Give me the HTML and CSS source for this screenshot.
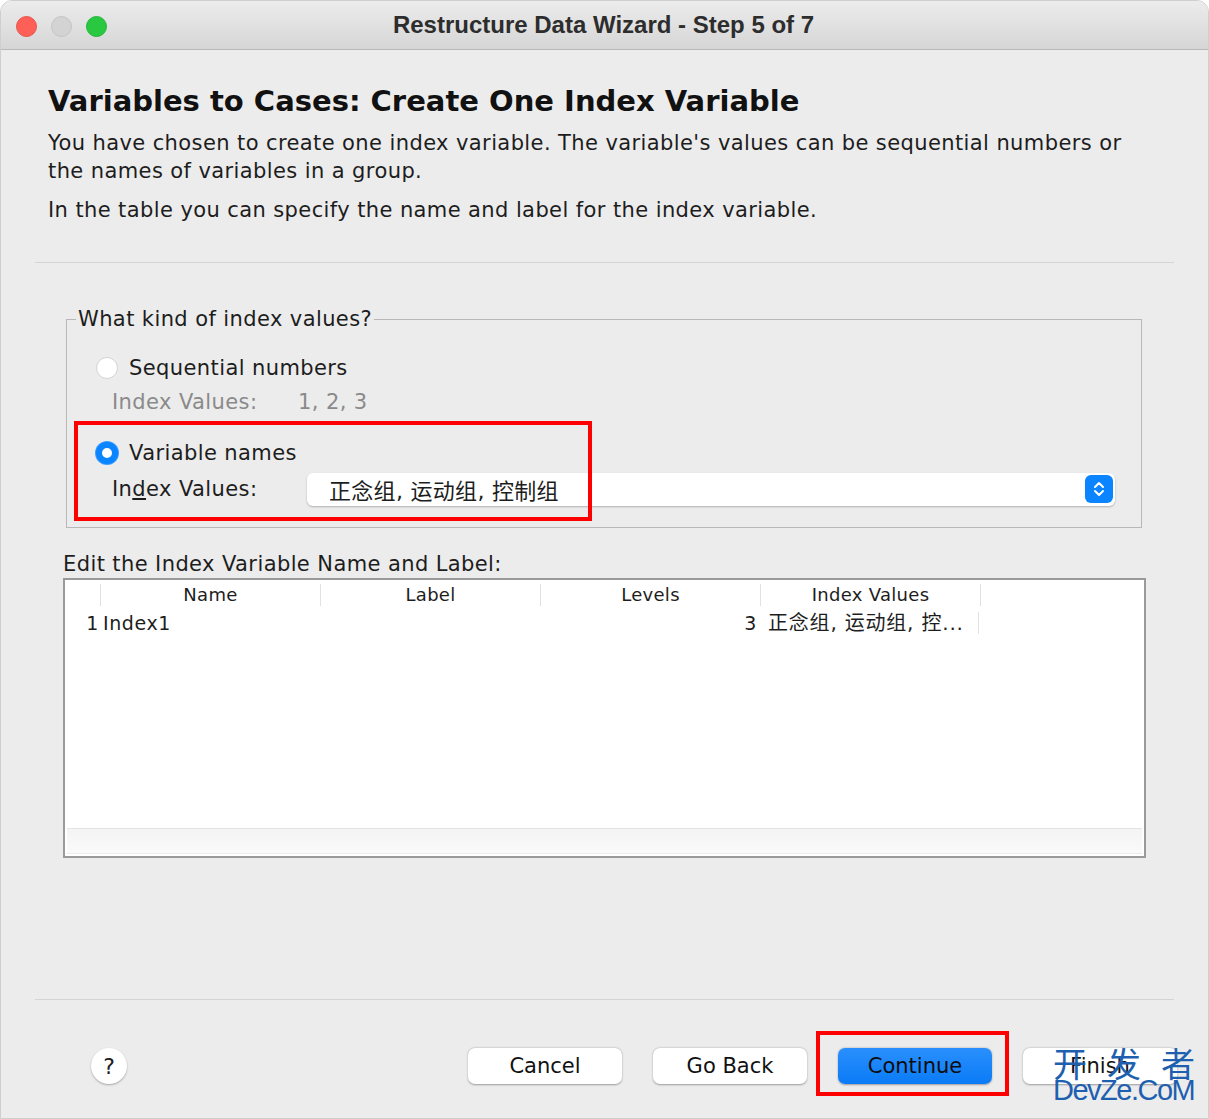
FILE: index.html
```html
<!DOCTYPE html>
<html>
    <head>
        <title>Restructure Data Wizard</title>
        <meta charset="utf-8" />
        <link rel="stylesheet" href="styles.css">
    </head>
    <body>
        <div class="window">
            <header class="titlebar">
                <span class="lights">
                    <i class="light red"></i>
                    <i class="light gray"></i>
                    <i class="light green"></i>
                </span>
                <span class="title">Restructure Data Wizard - Step 5 of 7</span>
            </header>

            <section class="intro">
                <h1>Variables to Cases: Create One Index Variable</h1>
                <p>You have chosen to create one index variable. The variable's values can be sequential numbers or the names of variables in a group.</p>
                <p class="second">In the table you can specify the name and label for the index variable.</p>
            </section>
            <hr class="sep" />

            <fieldset class="kind">
                <legend>What kind of index values?</legend>
                <div class="option">
                    <span class="radio"></span>
                    <span>Sequential numbers</span>
                </div>
                <div class="values muted">
                    <span class="vlabel">Index Values:</span>
                    <span>1, 2, 3</span>
                </div>
                <div class="option">
                    <span class="radio on"></span>
                    <span>Variable names</span>
                </div>
                <div class="values">
                    <span class="vlabel">In<u>d</u>ex Values:</span>
                    <span class="combo">
                        <span class="cjk">正念组, 运动组, 控制组</span>
                        <span class="stepper">
                            <svg width="14" height="20" viewBox="0 0 14 20">
                                <path d="M3 8 L7 4 L11 8 M3 12 L7 16 L11 12" fill="none" stroke="#fff" stroke-width="2" stroke-linecap="round" stroke-linejoin="round"/>
                            </svg>
                        </span>
                    </span>
                </div>
                <div class="highlight one"></div>
            </fieldset>

            <div class="table-title">Edit the Index Variable Name and Label:</div>
            <div class="table">
                <div class="row head">
                    <span class="c idx"></span>
                    <span class="c name">Name</span>
                    <span class="c label">Label</span>
                    <span class="c levels">Levels</span>
                    <span class="c ivals">Index Values</span>
                </div>
                <div class="row body">
                    <span class="c idx">1</span>
                    <span class="c name left">Index1</span>
                    <span class="c label"></span>
                    <span class="c levels right">3</span>
                    <span class="c ivals left">正念组, 运动组, 控...</span>
                </div>
                <div class="spacer"></div>
                <div class="hscroll"></div>
            </div>

            <div class="grow"></div>
            <hr class="sep" />

            <footer class="buttons">
                <span class="help">?</span>
                <span class="push"></span>
                <button class="btn">Cancel</button>
                <button class="btn">Go Back</button>
                <span class="boxed">
                    <button class="btn primary">Continue</button>
                </span>
                <span class="last">
                    <button class="btn">Finish</button>
                    <span class="mark">
                        <span class="cn"><span class="spread">开发</span>者</span>
                        <span class="en">DevZe.CoM</span>
                    </span>
                </span>
            </footer>
        </div>
    </body>
</html>
```
FILE: styles.css
```css
html, body {
    margin: 0;
    padding: 0;
    height: 100%;
    background: #fff;
}
body {
    font-family: "DejaVu Sans", "Noto Sans CJK SC", sans-serif;
    color: #1d1d1d;
}
.window {
    display: flex;
    flex-direction: column;
    height: 1117px;
    width: 1207px;
    background: #ececec;
    border: 1px solid #cfcfcf;
    border-radius: 12px 12px 0 0;
    overflow: hidden;
}
.titlebar {
    position: relative;
    display: flex;
    align-items: center;
    justify-content: center;
    height: 48px;
    flex: 0 0 auto;
    background: linear-gradient(#ececec, #d6d6d6);
    border-bottom: 1px solid #b9b9b9;
}
.lights {
    position: absolute;
    left: 15px;
    top: 15px;
    display: flex;
    gap: 14px;
}
.light {
    display: block;
    box-sizing: border-box;
    width: 21px;
    height: 21px;
    border-radius: 50%;
}
.light.red { background: #fe5f57; border: 1px solid #e8514a; }
.light.gray { background: #d3d3d3; border: 1px solid #c4c4c4; }
.light.green { background: #28c840; border: 1px solid #22b537; }
.title {
    font-family: "Liberation Sans", Arial, sans-serif;
    font-weight: bold;
    font-size: 24px;
    color: #2d2d2d;
    margin-left: -2px;
}
.intro {
    padding: 29px 47px 0 47px;
}
h1 {
    margin: 0;
    font-size: 29px;
    font-weight: bold;
    color: #111;
    line-height: 44px;
}
.intro p {
    margin: 0;
    margin-top: 6px;
    font-size: 21px;
    letter-spacing: 0.4px;
    line-height: 28px;
}
.intro p.second {
    margin-top: 11px;
}
.sep {
    margin: 38px 34px 0 34px;
    border: none;
    border-top: 1px solid #d4d4d4;
    height: 0;
}
.kind {
    position: relative;
    margin: 44px 66px 0 65px;
    padding: 22px 0 2px 29px;
    border: 1px solid #b8b8b8;
    font-size: 21px;
    letter-spacing: 0.4px;
}
.kind legend {
    padding: 0 2px;
    margin-left: -20px;
}
.option {
    display: flex;
    align-items: center;
    gap: 11px;
    height: 30px;
}
.radio {
    width: 22px;
    height: 22px;
    border-radius: 50%;
    background: #fff;
    border: 1px solid #d3d3d3;
    box-sizing: border-box;
}
.radio.on {
    background: #fff;
    border: 6px solid #0a84ff;
    box-shadow: 0 0 0 1px #3b9cff;
}
.values {
    display: flex;
    align-items: center;
    margin: 5px 0 20px 16px;
    height: 32px;
}
.values.muted {
    color: #8a8a8a;
    margin-top: 3px;
}
.vlabel {
    width: 195px;
}
.muted .vlabel {
    width: 186px;
}
.combo {
    flex: 1;
    display: flex;
    align-items: center;
    justify-content: space-between;
    height: 33px;
    margin-right: 26px;
    padding: 0 2px 0 22px;
    background: #fff;
    border-radius: 6px;
    box-shadow: 0 1px 2px rgba(0, 0, 0, 0.25);
}
.combo .cjk {
    font-size: 22px;
    letter-spacing: 0.3px;
}
.stepper {
    display: flex;
    align-items: center;
    justify-content: center;
    width: 28px;
    height: 28px;
    border-radius: 6px;
    background: #0a84ff;
}
.highlight {
    position: absolute;
    border: 4px solid #f00;
}
.highlight.one {
    left: 7px;
    top: 90px;
    width: 510px;
    height: 92px;
}
.table-title {
    margin: 22px 0 0 62px;
    font-size: 21px;
    letter-spacing: 0.4px;
    line-height: 28px;
}
.table {
    display: flex;
    flex-direction: column;
    margin: 0 62px 0 62px;
    height: 276px;
    background: #fff;
    border: 2px solid #9a9a9a;
}
.row {
    display: flex;
    height: 28px;
    align-items: center;
    font-size: 18px;
    letter-spacing: 0.3px;
}
.row.head {
    height: 29px;
}
.row .c {
    box-sizing: border-box;
    height: 22px;
    line-height: 22px;
    text-align: center;
    border-right: 1px solid #e2e2e2;
    white-space: nowrap;
}
.c.idx { width: 36px; }
.c.name, .c.label, .c.levels, .c.ivals { width: 220px; }
.row.body {
    font-size: 19px;
    letter-spacing: 0.6px;
}
.row.body .c.idx, .row.body .c.name, .row.body .c.label, .row.body .c.levels {
    border-right: none;
}
.c.left { text-align: left; padding-left: 2px; }
.c.right { text-align: right; padding-right: 4px; }
.row.body .c.idx { text-align: right; padding-right: 2px; }
.row.body .c.ivals {
    width: 218px;
    padding-left: 7px;
    font-size: 20px;
    letter-spacing: 0.8px;
}
.spacer {
    flex: 1;
}
.hscroll {
    height: 24px;
    margin: 0 2px 2px;
    background: linear-gradient(#f4f4f4, #fafafa);
    border-top: 1px solid #e4e4e4;
    border-bottom: 1px solid #ececec;
}
.grow {
    flex: 1;
}
.buttons {
    display: flex;
    align-items: center;
    height: 118px;
    box-sizing: border-box;
    padding: 14px 31px 0 90px;
    gap: 31px;
}
.help {
    width: 36px;
    height: 36px;
    border-radius: 50%;
    background: #fff;
    box-shadow: 0 1px 2px rgba(0, 0, 0, 0.3);
    display: flex;
    align-items: center;
    justify-content: center;
    font-size: 22px;
}
.push {
    flex: 1;
}
.btn {
    width: 154px;
    height: 36px;
    background: #fff;
    border: none;
    border-radius: 7px;
    box-shadow: 0 0.5px 2px rgba(0, 0, 0, 0.35);
    font-family: "DejaVu Sans", sans-serif;
    font-size: 21px;
    color: #111;
}
.btn.primary {
    background: linear-gradient(#2a8ffd, #0a7bf6);
    color: #0d0d0d;
}
.boxed {
    display: flex;
    padding: 13px 13px 8px 18px;
    margin: -5px -17px 0 -22px;
    border: 4px solid #f00;
}
.last {
    position: relative;
}
.mark {
    position: absolute;
    left: 30px;
    top: -2px;
    display: flex;
    flex-direction: column;
    color: #1e5fb0;
    line-height: 1;
    white-space: nowrap;
}
.mark .cn {
    font-family: "Noto Sans CJK SC", sans-serif;
    font-size: 34px;
}
.mark .spread {
    letter-spacing: 20px;
}
.mark .en {
    margin-top: -4px;
    font-family: "Liberation Sans", sans-serif;
    font-size: 29px;
    letter-spacing: -1.5px;
}
```
